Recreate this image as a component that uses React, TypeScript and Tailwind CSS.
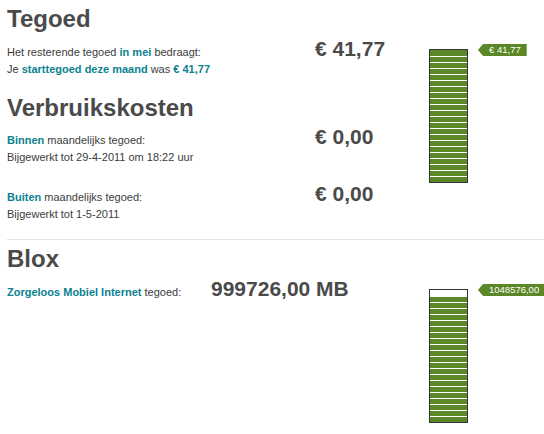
import React from "react";

const font = { fontFamily: '"Liberation Sans", Arial, sans-serif' };

function Tag({ label }: { label: string }) {
    return (
        <div className="ml-[10px] h-[12px] shrink-0 whitespace-nowrap bg-[#5b8726] pl-[11px] pr-[6px] text-[9.5px] leading-[12px] text-white [clip-path:polygon(5px_0,100%_0,100%_100%,5px_100%,0_50%)]">
            {label}
        </div>
    );
}

function Bar({ ratio }: { ratio: number }) {
    const total = 22;
    const filled = Math.round(total * ratio);
    const segments = Array.from({ length: total }, (_, i) => i >= total - filled);
    return (
        <div className="mt-[5px] flex h-[134px] w-[39px] shrink-0 flex-col gap-[1px] border border-[#333] bg-white">
            {segments.map((on, i) => (
                <div key={i} className={`${i === 0 ? "h-[6px]" : "h-[5px]"} ${on ? "bg-[#5b8726]" : "bg-white"}`} />
            ))}
        </div>
    );
}

function Heading({ children, className = "" }: { children: React.ReactNode; className?: string }) {
    return <h2 className={`text-[24px] font-bold leading-[28px] text-[#4a4a4a] ${className}`}>{children}</h2>;
}

function Row({ label, sub, amount, labelWidth, className = "" }: { label: React.ReactNode; sub?: React.ReactNode; amount: string; labelWidth: string; className?: string }) {
    return (
        <div className={`flex items-baseline ${className}`}>
            <div className={`${labelWidth} shrink-0 text-[11px] leading-[17px] text-[#3c3c3c]`}>
                <div>{label}</div>
                {sub && <div>{sub}</div>}
            </div>
            <div className="whitespace-nowrap text-[21px] font-bold leading-[24px] text-[#4a4a4a]">{amount}</div>
        </div>
    );
}

const Link = ({ children }: { children: React.ReactNode }) => <span className="font-bold text-[#0a8290]">{children}</span>;

export default function App() {
    return (
        <div style={font} className="h-[434px] w-[544px] overflow-hidden bg-white pl-[7px] pt-[5px]">
            <div className="flex">
                <div className="w-[422px] shrink-0">
                    <Heading>Tegoed</Heading>
                    <Row
                        className="mt-[4px]"
                        labelWidth="w-[308px]"
                        label={
                            <>
                                Het resterende tegoed <Link>in mei</Link> bedraagt:
                            </>
                        }
                        sub={
                            <>
                                Je <Link>starttegoed deze maand</Link> was <Link>€ 41,77</Link>
                            </>
                        }
                        amount="€ 41,77"
                    />
                    <Heading className="mt-[16px]">Verbruikskosten</Heading>
                    <Row
                        className="mt-[3px]"
                        labelWidth="w-[308px]"
                        label={
                            <>
                                <Link>Binnen</Link> maandelijks tegoed:
                            </>
                        }
                        sub="Bijgewerkt tot 29-4-2011 om 18:22 uur"
                        amount="€ 0,00"
                    />
                    <Row
                        className="mt-[16px]"
                        labelWidth="w-[308px]"
                        label={
                            <>
                                <Link>Buiten</Link> maandelijks tegoed:
                            </>
                        }
                        sub="Bijgewerkt tot 1-5-2011"
                        amount="€ 0,00"
                    />
                </div>
                <div className="flex items-start pt-[39px]">
                    <Bar ratio={1} />
                    <Tag label="€ 41,77" />
                </div>
            </div>

            <div className="mt-[16px] h-px bg-[#e2e2e2]" />

            <div className="flex">
                <div className="w-[422px] shrink-0">
                    <Heading className="mt-[5px]">Blox</Heading>
                    <Row
                        className="mt-[4px]"
                        labelWidth="w-[204px]"
                        label={
                            <>
                                <Link>Zorgeloos Mobiel Internet</Link> tegoed:
                            </>
                        }
                        amount="999726,00 MB"
                    />
                </div>
                <div className="flex items-start pt-[44px]">
                    <Bar ratio={999726 / 1048576} />
                    <Tag label="1048576,00" />
                </div>
            </div>
        </div>
    );
}
